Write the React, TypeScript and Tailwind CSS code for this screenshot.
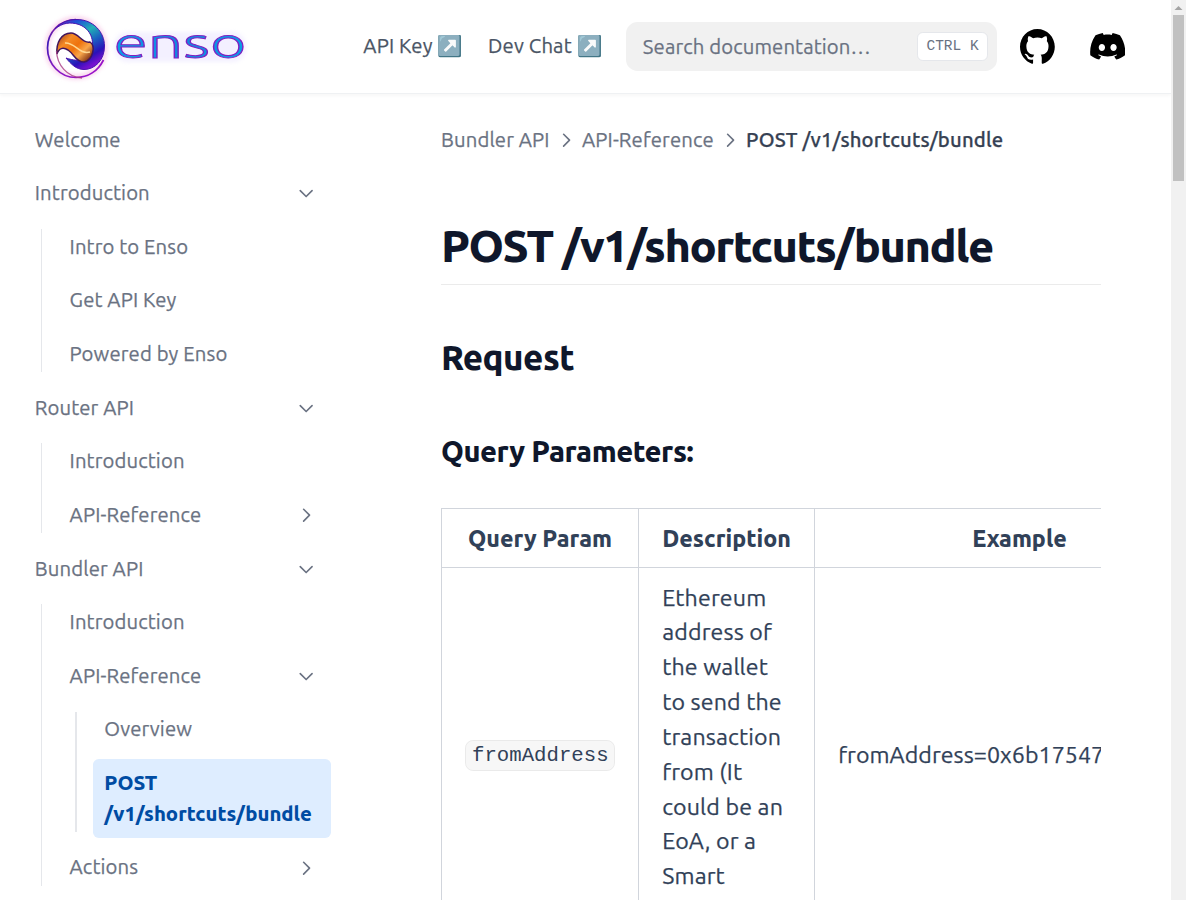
import { ReactNode } from 'react';

const Chevron = ({ down = false, className = '' }: { down?: boolean; className?: string }) => (
  <svg
    viewBox="0 0 24 24"
    fill="none"
    stroke="currentColor"
    strokeWidth="1.9"
    strokeLinecap="round"
    strokeLinejoin="round"
    className={`shrink-0 ${down ? 'rotate-90' : ''} ${className}`}
  >
    <path d="M9 5l7 7-7 7" />
  </svg>
);

const Logo = () => (
  <svg width="218" height="76" viewBox="34 8 218 76" className="block shrink-0 [-webkit-text-stroke:0]" role="img">
    <defs>
      <linearGradient id="ring" x1="0" y1="0" x2="0.6" y2="1">
        <stop offset="0" stopColor="#c4269b" />
        <stop offset="0.3" stopColor="#3b18b8" />
        <stop offset="0.6" stopColor="#7a1bc0" />
        <stop offset="1" stopColor="#9a13c9" />
      </linearGradient>
      <linearGradient id="wave" x1="0" y1="0" x2="0.6" y2="1">
        <stop offset="0" stopColor="#7c1fb0" />
        <stop offset="0.22" stopColor="#1f4fd8" />
        <stop offset="0.45" stopColor="#21b0b6" />
        <stop offset="0.65" stopColor="#1b5fc0" />
        <stop offset="0.85" stopColor="#2a12b8" />
        <stop offset="1" stopColor="#7510cf" />
      </linearGradient>
      <linearGradient id="flame" x1="0" y1="0" x2="1" y2="0.8">
        <stop offset="0" stopColor="#8a3020" />
        <stop offset="0.3" stopColor="#f58a25" />
        <stop offset="0.55" stopColor="#ee720c" />
        <stop offset="0.75" stopColor="#f9a64a" />
        <stop offset="1" stopColor="#7a2a10" />
      </linearGradient>
      <linearGradient id="word" x1="0" y1="0" x2="1" y2="0">
        <stop offset="0" stopColor="#08a0e8" />
        <stop offset="0.5" stopColor="#1484e0" />
        <stop offset="1" stopColor="#08a0e8" />
      </linearGradient>
      <filter id="glow" x="-20%" y="-20%" width="140%" height="140%">
        <feGaussianBlur stdDeviation="2.2" />
      </filter>
    </defs>
    <circle cx="76" cy="47" r="29" fill="none" stroke="#f3a6d8" strokeWidth="5" opacity="0.5" filter="url(#glow)" />
    <rect x="114" y="31" width="132" height="30" rx="14" fill="#e3dcff" opacity="0.4" filter="url(#glow)" />
    <g transform="translate(0 -1)">
      <path
        d="M103.500 60C98 71 88 77.500 76 77.500C60 77.500 47.500 64 47.500 48C47.500 32 60 19.500 76 19.500"
        fill="none"
        stroke="url(#ring)"
        strokeWidth="1.700"
      />
      <path
        d="M55 29C61 22 69 19.500 77 19.500C93 19.500 104.500 32 104.500 46C104.500 60 95 69.500 84 69.500C76 69.500 71 64 66 58C72 60 86 64 91 52C95 41 91 29 79 24.500C70 21.500 62 23 55 29Z"
        fill="url(#wave)"
        stroke="#4a12b0"
        strokeWidth="1"
      />
      <path
        d="M57 54C56 43 61 33 71 33C79 33 82 44 90 42C96 46 93 60 84 62C76 62 74 54 68 50C63 47 59 48 57 54Z"
        fill="url(#flame)"
        stroke="#41155c"
        strokeWidth="1.500"
      />
      <path d="M65 43C75 42 79 55 90 52" fill="none" stroke="#ffd790" strokeWidth="1.500" />
      <path d="M56.500 52C57 66 67 78 82 79" fill="none" stroke="#a63a83" strokeWidth="1.300" opacity="0.8" transform="translate(0 -1)" />
    </g>
    <text
      x="0"
      y="0"
      transform="translate(113.500 57.200)"
      textLength="133"
      lengthAdjust="spacingAndGlyphs"
      fontSize="43.5"
      fontWeight="300"
      fill="url(#word)"
      stroke="#8020c0"
      strokeWidth="1"
    >
      enso
    </text>
  </svg>
);

const Row = ({ children, chevron, active = false }: { children: ReactNode; chevron?: 'down' | 'right'; active?: boolean }) => (
  <li
    className={
      active
        ? 'flex rounded-[5.8px] bg-[#deedff] px-[11.6px] pt-[8.7px] pb-[9px] font-[760] tracking-normal text-[#004ca3] [-webkit-text-stroke:0]'
        : 'flex items-center justify-between px-[11.6px] py-[8.7px] text-gray-500'
    }
  >
    <span>{children}</span>
    {chevron && <Chevron down={chevron === 'down'} className="mr-[3px] h-[20.3px] w-[20.3px]" />}
  </li>
);

const Nested = ({ children, deep = false }: { children: ReactNode; deep?: boolean }) => (
  <li className="flex">
    <div className={deep ? 'my-[5.8px] ml-[17.4px] w-[2px] shrink-0 bg-gray-200' : 'my-[5.8px] ml-[17.8px] w-px shrink-0 bg-gray-200'} />
    <ul className={deep ? 'ml-[15.4px] flex grow flex-col gap-[5.8px]' : 'ml-[16px] flex grow flex-col gap-[5.8px]'}>{children}</ul>
  </li>
);

const Header = () => (
  <header className="flex h-[94px] shrink-0 items-center border-b border-gray-200/60 pr-[46px] shadow-[0_2px_3px_rgba(0,0,0,0.03)]">
    <div className="ml-[34px] grow">
      <Logo />
    </div>
    <nav className="flex text-[20.3px] tracking-[0.16px] text-gray-600">
      <a className="mr-[25.500px] whitespace-nowrap">API Key ↗️</a>
      <a className="mr-[24px] whitespace-nowrap">Dev Chat ↗️</a>
    </nav>
    <div className="flex h-[49px] w-[371px] items-center justify-between rounded-[11.6px] bg-[#f1f1f1] pr-[9px] pl-[17px]">
      <span className="pt-[2px] text-[20.3px] tracking-[0.12px] text-gray-500">Search documentation…</span>
      <kbd className="flex h-[29px] w-[70.500px] items-center justify-center rounded-[5.8px] border border-gray-200 bg-white font-['Liberation_Mono',monospace] text-[14.5px] whitespace-pre text-gray-500 [-webkit-text-stroke:0]">
        CTRL K
      </kbd>
    </div>
    <svg viewBox="3 3 18 18" className="ml-[23px] h-[34.8px] w-[34.8px] shrink-0" fill="#000">
      <path d="M12 3C7.0275 3 3 7.12937 3 12.2276C3 16.3109 5.57625 19.7597 9.15374 20.9824C9.60374 21.0631 9.77249 20.7863 9.77249 20.5441C9.77249 20.3249 9.76125 19.5982 9.76125 18.8254C7.5 19.2522 6.915 18.2602 6.735 17.7412C6.63375 17.4759 6.19499 16.6569 5.8125 16.4378C5.4975 16.2647 5.0475 15.838 5.80124 15.8264C6.51 15.8149 7.01625 16.4954 7.18499 16.7723C7.99499 18.1679 9.28875 17.7758 9.80625 17.5335C9.885 16.9337 10.1212 16.53 10.38 16.2993C8.3775 16.0687 6.285 15.2728 6.285 11.7432C6.285 10.7397 6.63375 9.9092 7.20749 9.26326C7.1175 9.03257 6.8025 8.08674 7.2975 6.81794C7.2975 6.81794 8.05125 6.57571 9.77249 7.76377C10.4925 7.55615 11.2575 7.45234 12.0225 7.45234C12.7875 7.45234 13.5525 7.55615 14.2725 7.76377C15.9937 6.56418 16.7475 6.81794 16.7475 6.81794C17.2424 8.08674 16.9275 9.03257 16.8375 9.26326C17.4113 9.9092 17.76 10.7281 17.76 11.7432C17.76 15.2843 15.6563 16.0687 13.6537 16.2993C13.98 16.5877 14.2613 17.1414 14.2613 18.0065C14.2613 19.2407 14.25 20.2326 14.25 20.5441C14.25 20.7863 14.4188 21.0746 14.8688 20.9824C16.6554 20.364 18.2079 19.1866 19.3078 17.6162C20.4077 16.0457 20.9995 14.1611 21 12.2276C21 7.12937 16.9725 3 12 3Z" />
    </svg>
    <svg viewBox="0 5 30.67 23.25" className="ml-[35px] h-[26.6px] w-[35.4px] shrink-0" fill="#000">
      <path d="M26.0015 6.9529C24.0021 6.03845 21.8787 5.37198 19.6623 5C19.3833 5.48048 19.0733 6.13144 18.8563 6.64292C16.4989 6.30193 14.1585 6.30193 11.8336 6.64292C11.6166 6.13144 11.2911 5.48048 11.0276 5C8.79575 5.37198 6.67235 6.03845 4.6869 6.9529C0.672601 12.8736 -0.41235 18.6548 0.130124 24.3585C2.79599 26.2959 5.36889 27.4739 7.89682 28.2489C8.51679 27.4119 9.07477 26.5129 9.55525 25.5675C8.64079 25.2265 7.77283 24.808 6.93587 24.312C7.15286 24.1571 7.36986 23.9866 7.57135 23.8161C12.6241 26.1255 18.0969 26.1255 23.0876 23.8161C23.3046 23.9866 23.5061 24.1571 23.7231 24.312C22.8861 24.808 22.0182 25.2265 21.1037 25.5675C21.5842 26.5129 22.1422 27.4119 22.7621 28.2489C25.2885 27.4739 27.8769 26.2959 30.5288 24.3585C31.1952 17.7559 29.4733 12.0212 26.0015 6.9529ZM10.2527 20.8402C8.73376 20.8402 7.49382 19.4608 7.49382 17.7714C7.49382 16.082 8.70276 14.7025 10.2527 14.7025C11.7871 14.7025 13.0425 16.082 13.0115 17.7714C13.0115 19.4608 11.7871 20.8402 10.2527 20.8402ZM20.4373 20.8402C18.9183 20.8402 17.6768 19.4608 17.6768 17.7714C17.6768 16.082 18.8873 14.7025 20.4373 14.7025C21.9717 14.7025 23.2271 16.082 23.1961 17.7714C23.1961 19.4608 21.9872 20.8402 20.4373 20.8402Z" />
    </svg>
  </header>
);

const Sidebar = () => (
  <aside className="w-[331px] shrink-0 pt-[21.9px] pl-[23.2px] text-[20.3px] leading-[30.45px] tracking-[0.13px]">
    <ul className="flex flex-col gap-[5.8px]">
      <Row>Welcome</Row>
      <Row chevron="down">Introduction</Row>
      <Nested>
        <Row>Intro to Enso</Row>
        <Row>Get API Key</Row>
        <Row>Powered by Enso</Row>
      </Nested>
      <Row chevron="down">Router API</Row>
      <Nested>
        <Row>Introduction</Row>
        <Row chevron="right">API-Reference</Row>
      </Nested>
      <Row chevron="down">Bundler API</Row>
      <Nested>
        <Row>Introduction</Row>
        <Row chevron="down">API-Reference</Row>
        <Nested deep>
          <Row>Overview</Row>
          <Row active>
            POST
            <br />
            /v1/shortcuts/bundle
          </Row>
        </Nested>
        <Row chevron="right">Actions</Row>
      </Nested>
    </ul>
  </aside>
);

const cell = 'border border-gray-300 px-[23.2px] py-[11.6px]';
const heading = 'font-[760] [-webkit-text-stroke:0]';

const Content = () => (
  <main className="ml-[110px] w-[660px] shrink-0 overflow-hidden text-slate-900">
    <div className="mt-[31px] flex h-[30px] items-center gap-[6px] text-[20.3px] tracking-[0.13px] whitespace-nowrap text-gray-500">
      <span>Bundler API</span>
      <Chevron className="h-[20.3px] w-[20.3px]" />
      <span>API-Reference</span>
      <Chevron className="h-[20.3px] w-[20.3px]" />
      <span className="font-medium tracking-[0.17px] text-gray-700">POST /v1/shortcuts/bundle</span>
    </div>
    <h1 className={`${heading} mt-[64px] h-[66px] border-b border-[#ebebeb] text-[45px] leading-[54px] tracking-[-0.0327em]`}>
      POST /v1/shortcuts/bundle
    </h1>
    <h2 className={`${heading} mt-[51px] text-[34.8px] leading-[44px] tracking-[-0.015em]`}>Request</h2>
    <h3 className={`${heading} mt-[52px] text-[29px] leading-[38px] tracking-[-0.015em]`}>Query Parameters:</h3>
    <table className="mt-[38px] w-[783px] table-fixed border-collapse text-[23.2px] leading-[34.8px] text-slate-700">
      <colgroup>
        <col className="w-[197px]" />
        <col className="w-[176px]" />
        <col className="w-[410px]" />
      </colgroup>
      <thead>
        <tr>
          <th className={`${cell} ${heading}`}>Query Param</th>
          <th className={`${cell} ${heading}`}>Description</th>
          <th className={`${cell} ${heading}`}>Example</th>
        </tr>
      </thead>
      <tbody>
        <tr className="h-[374px]">
          <td className={cell}>
            <code className="rounded-[8px] border border-black/5 bg-black/[0.03] px-[5.8px] py-[3.2px] font-['Liberation_Mono',monospace] text-[20.7px] [-webkit-text-stroke:0]">
              fromAddress
            </code>
          </td>
          <td className={`${cell} align-top leading-[34.85px] tracking-[0.14px]`}>
            Ethereum
            <br />
            address of
            <br />
            the wallet
            <br />
            to send the
            <br />
            transaction
            <br />
            from (It
            <br />
            could be an
            <br />
            EoA, or a
            <br />
            Smart
          </td>
          <td className={`${cell} tracking-[0.05px] whitespace-nowrap`}>fromAddress=0x6b175474e89094c44da98</td>
        </tr>
      </tbody>
    </table>
  </main>
);

export default function App() {
  return (
    <div className="flex h-screen w-full overflow-hidden bg-white font-['Ubuntu','Noto_Sans',sans-serif] [-webkit-text-stroke:0.25px_currentColor]">
      <div className="flex min-w-0 grow flex-col">
        <Header />
        <div className="flex min-h-0 grow overflow-hidden">
          <Sidebar />
          <Content />
        </div>
      </div>
      <div className="flex w-[15px] shrink-0 flex-col items-center bg-[#f1f1f1]">
        <svg width="15" height="15" viewBox="0 0 15 15" className="block">
          <path d="M3.500 10L7.500 6L11.500 10Z" fill="#a3a3a3" />
        </svg>
        <div className="h-[166px] w-[11px] bg-[#c1c1c1]" />
      </div>
    </div>
  );
}
